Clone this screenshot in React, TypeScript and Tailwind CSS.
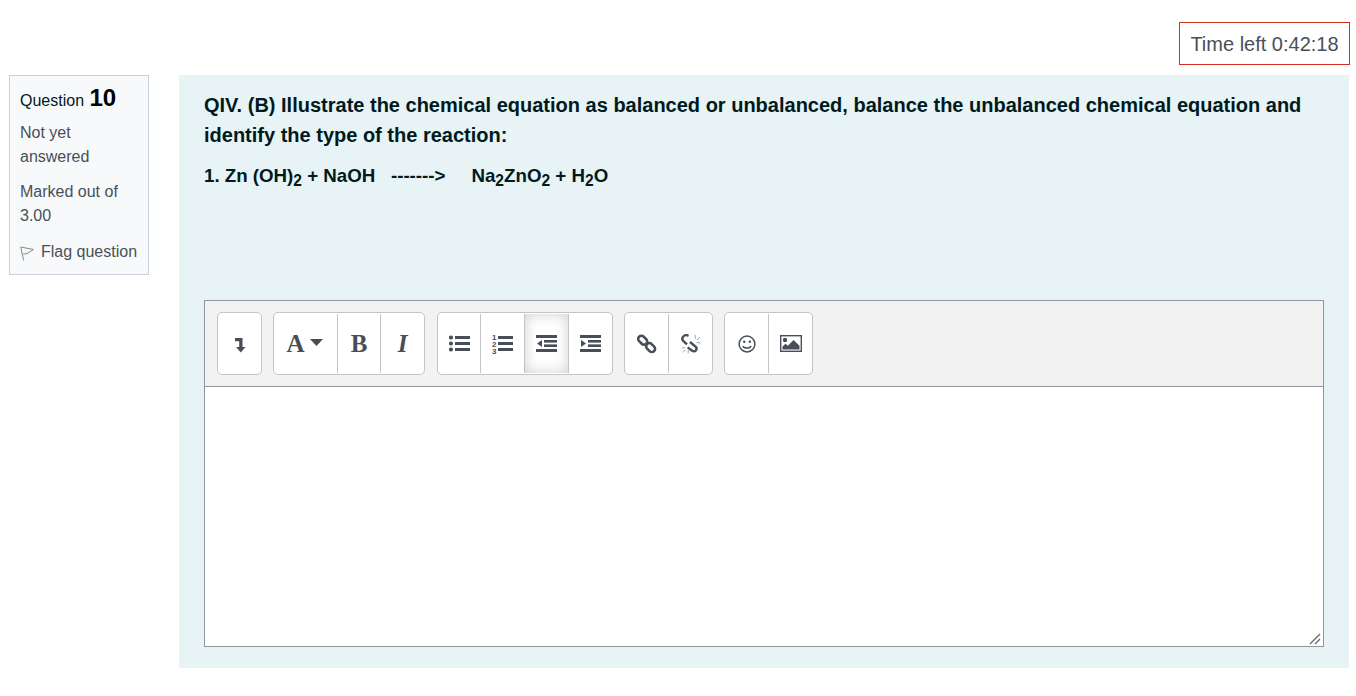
import type { ReactNode } from "react";

function ToolButton({ children, active, first, width = "w-[44px]" }: { children: ReactNode; active?: boolean; first?: boolean; width?: string }) {
  return (
    <div
      className={`flex h-full items-center justify-center ${width} ${first ? "" : "border-l border-[#c4c4c4]"} ${active ? "shadow-[inset_0_0_14px_#cfcfcf]" : ""}`}
    >
      {children}
    </div>
  );
}

function Group({ children, className = "" }: { children: ReactNode; className?: string }) {
  return (
    <div className={`flex h-[63px] overflow-hidden rounded-[5px] border border-[#c4c4c4] bg-white py-px ${className}`}>
      {children}
    </div>
  );
}

const iconFill = "#474e57";

function ListBullets() {
  return (
    <svg width="21" height="17" viewBox="0 0 21 17" fill={iconFill}>
      <circle cx="2" cy="2.5" r="2.1" />
      <circle cx="2" cy="8.5" r="2.1" />
      <circle cx="2" cy="14.5" r="2.1" />
      <rect x="6" y="1" width="15" height="3" />
      <rect x="6" y="7" width="15" height="3" />
      <rect x="6" y="13" width="15" height="3" />
    </svg>
  );
}

function ListNumbers() {
  return (
    <svg width="21" height="21" viewBox="0 0 21 21" fill={iconFill}>
      <text x="0" y="6.5" fontSize="8" fontWeight="700" fontFamily="Liberation Sans, sans-serif">1</text>
      <text x="0" y="13.5" fontSize="8" fontWeight="700" fontFamily="Liberation Sans, sans-serif">2</text>
      <text x="0" y="20.5" fontSize="8" fontWeight="700" fontFamily="Liberation Sans, sans-serif">3</text>
      <rect x="6" y="3" width="15" height="3" />
      <rect x="6" y="9" width="15" height="3" />
      <rect x="6" y="15" width="15" height="3" />
    </svg>
  );
}

function Outdent() {
  return (
    <svg width="21" height="17" viewBox="0 0 21 17" fill={iconFill}>
      <rect x="0" y="0" width="21" height="3" />
      <rect x="8" y="5" width="13" height="2.6" />
      <rect x="8" y="9.4" width="13" height="2.6" />
      <rect x="0" y="14" width="21" height="3" />
      <path d="M6 5v7L1 8.5z" />
    </svg>
  );
}

function Indent() {
  return (
    <svg width="21" height="17" viewBox="0 0 21 17" fill={iconFill}>
      <rect x="0" y="0" width="21" height="3" />
      <rect x="8" y="5" width="13" height="2.6" />
      <rect x="8" y="9.4" width="13" height="2.6" />
      <rect x="0" y="14" width="21" height="3" />
      <path d="M1 5v7L6 8.5z" />
    </svg>
  );
}

function LinkIcon() {
  return (
    <svg width="20" height="20" viewBox="0 0 20 20" fill="none" stroke={iconFill} strokeWidth="2.6">
      <rect x="0.7" y="3" width="10" height="6.4" rx="3.2" transform="rotate(45 5.7 6.2)" />
      <rect x="8.6" y="10.4" width="10" height="6.4" rx="3.2" transform="rotate(45 13.6 13.6)" />
    </svg>
  );
}

function UnlinkIcon() {
  return (
    <svg width="20" height="20" viewBox="0 0 20 20" fill="none" stroke={iconFill}>
      <path d="M7.5 1.8 6 1.2C4.2.8 2 2.2 1.4 4c-.4 1.1 0 2 .8 2.8L6 10.4" strokeWidth="2.4" />
      <path d="M9 8l5.6 4.6c1.1 1 1.2 2.6.2 3.8-1 1.2-2.6 1.3-3.7.3L6.6 13.4" strokeWidth="2.4" />
      <path d="M14 .8l.5 4M19 3l-3 3M19.4 9l-3.8-.5M.8 14l3.4-.5M2 18.4l2.6-2.8M7.2 19.5V16" strokeWidth="1" stroke="#a3a6aa" />
    </svg>
  );
}

function SmileIcon() {
  return (
    <svg width="18" height="18" viewBox="0 0 18 18" fill="none" stroke={iconFill} strokeWidth="1.5">
      <circle cx="9" cy="9" r="7.9" />
      <circle cx="6.2" cy="6.8" r="1.2" fill={iconFill} stroke="none" />
      <circle cx="11.8" cy="6.8" r="1.2" fill={iconFill} stroke="none" />
      <path d="M5 11c1 2.8 7 2.8 8 0" />
    </svg>
  );
}

function ImageIcon() {
  return (
    <svg width="22" height="17" viewBox="0 0 22 17">
      <rect x="0.7" y="0.7" width="20.6" height="15.6" fill="#fff" stroke={iconFill} strokeWidth="1.4" />
      <circle cx="5" cy="5" r="2.2" fill={iconFill} />
      <path d="M2.5 14.5v-3l3-2.8 2.4 2 5.6-5.6 6 5.6v3.8z" fill={iconFill} />
    </svg>
  );
}

function Serif({ children, italic }: { children: ReactNode; italic?: boolean }) {
  return (
    <span className={`font-['Liberation_Serif',serif] text-[25px] font-bold leading-none text-[#474e57] ${italic ? "italic" : ""}`}>
      {children}
    </span>
  );
}

export default function App() {
  return (
    <div className="min-h-[696px] bg-white font-['Liberation_Sans',Arial,sans-serif] text-[#495057]">
      <div className="flex justify-end pt-[22px] pr-[6px]">
        <div className="flex h-[43px] w-[171px] items-center justify-center border border-[#d0301f] text-[20px]">
          Time left 0:42:18
        </div>
      </div>

      <div className="mt-[10px] flex items-start pl-[9px] pr-[7px]">
        <aside className="h-[200px] w-[140px] shrink-0 border border-[#c8d0dc] bg-[#f8f9fa] pt-[7px] pr-[14px] pl-[10px] text-[16px] leading-[24px]">
          <h3 className="text-[16px] leading-[30px] text-[#001a1e]">
            Question <span className="ml-[1px] text-[24px] font-bold text-black">10</span>
          </h3>
          <p className="mt-[5px]">Not yet answered</p>
          <p className="mt-[11px]">Marked out of 3.00</p>
          <div className="mt-[12px] flex items-center gap-[7px] whitespace-nowrap">
            <svg width="14" height="15" viewBox="0 0 14 15" fill="none" stroke="#8a8a8a" strokeWidth="1" className="mt-[2px] shrink-0">
              <path d="M.8 1 13.5 3.5 7 7.6 3.2 8.2M.8 1 3.6 14.5" />
            </svg>
            <span>Flag question</span>
          </div>
        </aside>

        <main className="ml-[30px] h-[593px] flex-1 bg-[#e7f3f5] pt-[15px] pl-[25px] pr-[25px] text-[#001a1e]">
          <p className="text-[20px] leading-[30px] font-bold">
            QIV. (B) Illustrate the chemical equation as balanced or unbalanced, balance the unbalanced chemical equation and identify the type of the reaction:
          </p>
          <p className="mt-[11px] text-[18.72px] leading-[30px] font-bold whitespace-pre">
            1. Zn (OH)<sub className="text-[15.6px]">2</sub> + NaOH{"   "}-------&gt;{"     "}Na<sub className="text-[15.6px]">2</sub>ZnO<sub className="text-[15.6px]">2</sub> + H<sub className="text-[15.6px]">2</sub>O
          </p>

          <div className="mt-[109px] border border-[#8f959e]">
            <div className="flex h-[86px] items-center gap-[11px] border-b border-[#8f959e] bg-[#f2f2f2] pl-[12px]">
              <Group>
                <ToolButton first width="w-[43px]">
                  <svg width="12" height="16" viewBox="0 0 12 16" fill={iconFill} className="mt-[2px]">
                    <path d="M1 1h7.5v9H11.5L6.8 15.5 2 10h3.2V4.2H1z" />
                  </svg>
                </ToolButton>
              </Group>
              <Group>
                <ToolButton first width="w-[63px]">
                  <span className="flex items-center gap-[5px] pr-[2px]">
                    <Serif>A</Serif>
                    <svg width="13" height="7" viewBox="0 0 13 7" fill={iconFill} className="mb-[2px]">
                      <path d="M0 0h13L6.5 7z" />
                    </svg>
                  </span>
                </ToolButton>
                <ToolButton width="w-[43px]">
                  <Serif>B</Serif>
                </ToolButton>
                <ToolButton>
                  <Serif italic>I</Serif>
                </ToolButton>
              </Group>
              <Group className="ml-[1px]">
                <ToolButton first width="w-[42px]"><ListBullets /></ToolButton>
                <ToolButton><ListNumbers /></ToolButton>
                <ToolButton active><Outdent /></ToolButton>
                <ToolButton><Indent /></ToolButton>
              </Group>
              <Group>
                <ToolButton first width="w-[43px]"><LinkIcon /></ToolButton>
                <ToolButton><UnlinkIcon /></ToolButton>
              </Group>
              <Group>
                <ToolButton first width="w-[43px]"><SmileIcon /></ToolButton>
                <ToolButton><ImageIcon /></ToolButton>
              </Group>
            </div>
            <div className="relative h-[259px] bg-white">
              <svg width="12" height="12" viewBox="0 0 12 12" stroke="#666" strokeWidth="1.3" className="absolute right-[2px] bottom-[1px]">
                <path d="M1 11 11 1M6 11l5-5" />
              </svg>
            </div>
          </div>
        </main>
      </div>
    </div>
  );
}
